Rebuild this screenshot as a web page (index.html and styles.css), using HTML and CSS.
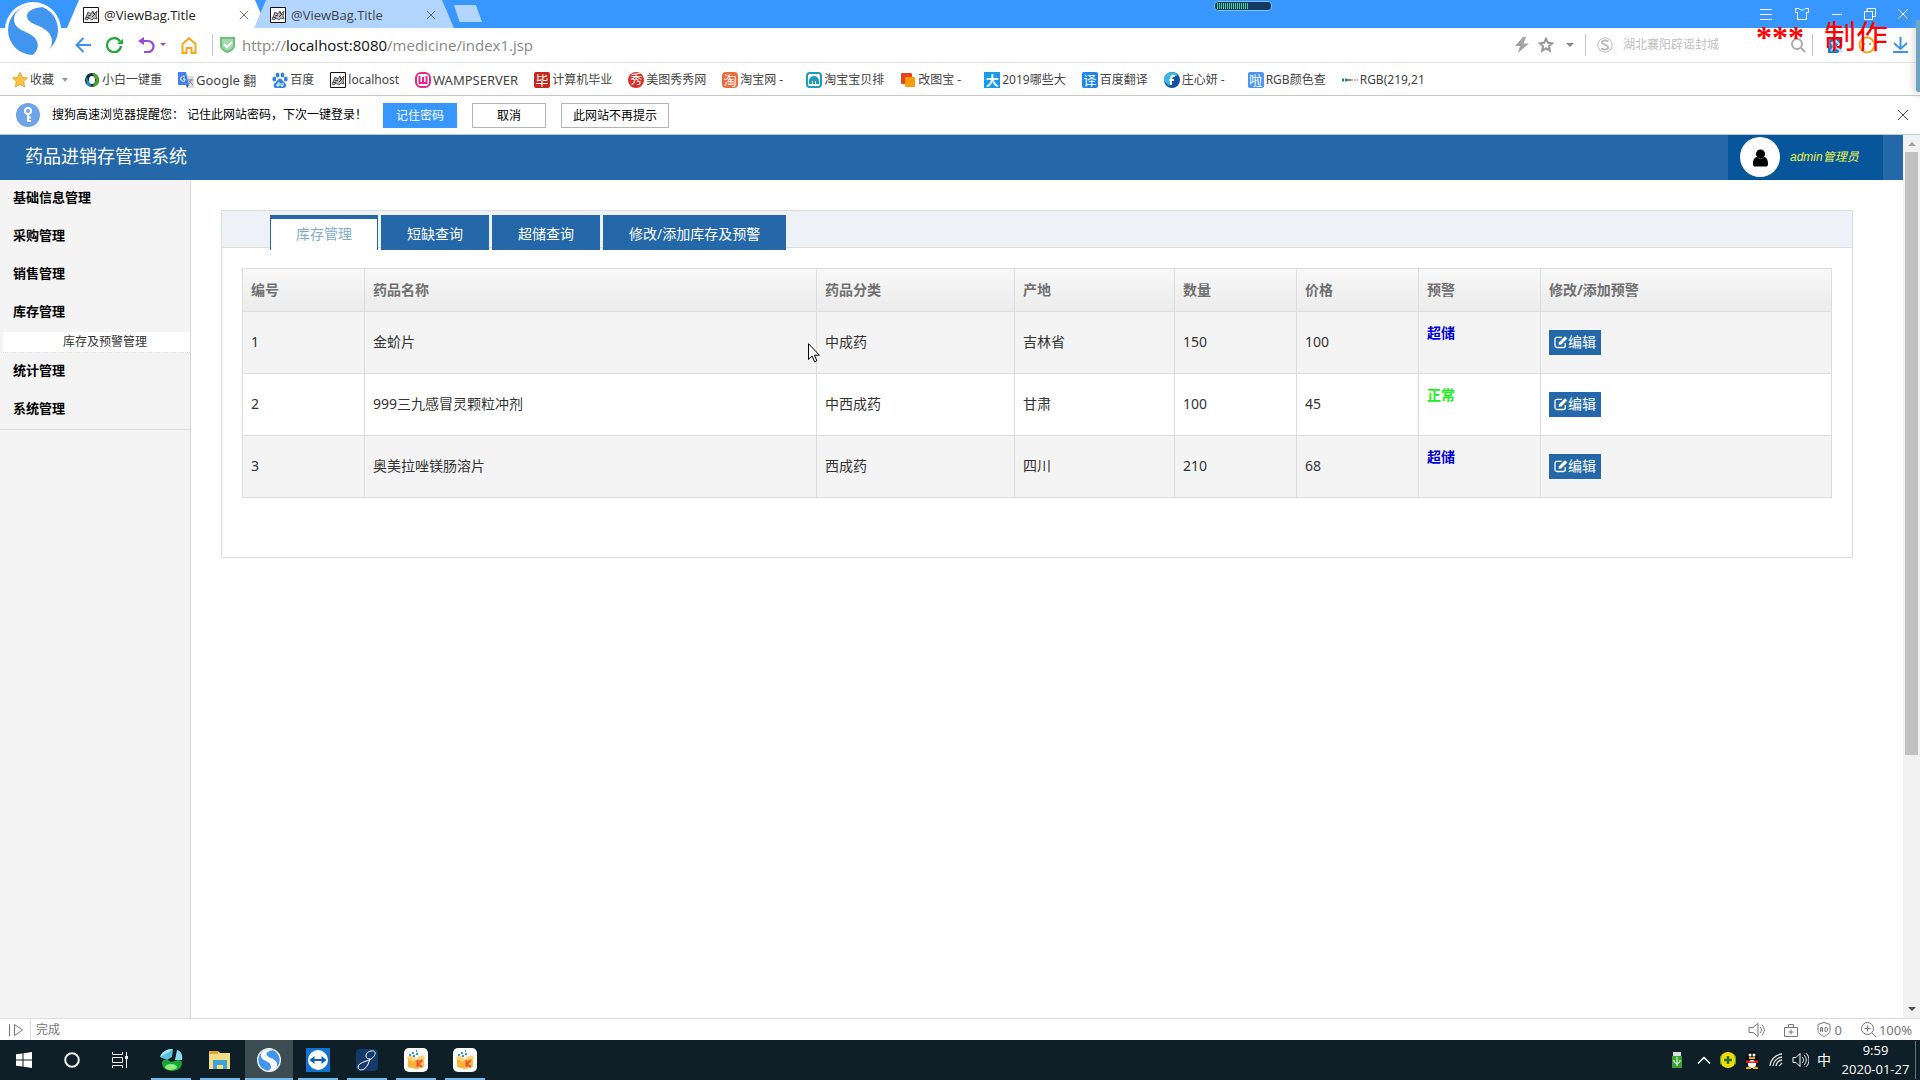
FILE: index.html
```html
<!DOCTYPE html>
<html lang="zh-CN">
<head>
<meta charset="utf-8">
<title>@ViewBag.Title</title>
<link rel="stylesheet" href="styles.css">
</head>
<body>
<svg class="defs" aria-hidden="true">
  <symbol id="site" viewBox="0 0 16 16"><path d="M.5.5h15v15H.5z" fill="#fff" stroke="#111"/><path d="M2 12l2-4 1-3 3 2 2-3 1 3 3-3-1 5 1 3-3-1-2 2-3-2-2 2-2-1" stroke="#555" fill="#bbb"/><path d="M5 9l3-1M9 10l3-3M3 10l3 1M10 5l2 3" stroke="#333" fill="none"/></symbol>
  <symbol id="x" viewBox="0 0 12 12"><path d="M1 1l10 10M11 1L1 11" stroke="currentColor" fill="none"/></symbol>
  <symbol id="edit" viewBox="0 0 14 14"><path d="M11.3 8v2.5a2 2 0 0 1-2 2H3a2 2 0 0 1-2-2V4.300a2 2 0 0 1 2-2h5" stroke="#fff" stroke-width="1.300" fill="none"/><path d="M4.600 9.800l.4-2.600 6-6 2.300 2.300-6 6z" fill="#fff"/></symbol>
  <symbol id="sogou" viewBox="0 0 56 56"><circle cx="28" cy="28" r="28" fill="#fff"/><circle cx="28" cy="28" r="25" fill="#4295ee"/><path d="M40 5C25-1 8 7 9 18c1 11 15 11 21 18 6 8 1 15-4 18 12 1 21-6 21-14 0-9-7-13-13-16-6-2-12-5-12-10 0-5 7-9 18-9z" fill="#fff"/></symbol>
  <symbol id="kbox" viewBox="0 0 24 24"><rect width="24" height="24" rx="5" fill="#fff"/><path d="M4 10l8 2 8-2v9l-8 2-8-2z" fill="#fbb23a"/><path d="M2 10l4-3 6 3-2 4zM22 10l-4-3-6 3 2 4z" fill="#ffd27c"/><path d="M12 12l8-2v9l-8 2z" fill="#ffc255"/><path d="M13.500 12v7M18 12l-4 4 4 3" stroke="#f0562a" stroke-width="2" fill="none"/><path d="M5 6h2v2H5zM8 4h2v2H8zM9 7h2v2H9zM12 2h1v2h-1zM12 5h2v2h-2z" fill="#2b9fe0"/></symbol>
</svg>

<header class="titlebar">
  <div class="tab tab-active"><svg class="i16"><use href="#site"/></svg><span>@ViewBag.Title</span><button class="plain" aria-label="关闭标签"><svg width="10" height="10"><use href="#x"/></svg></button></div>
  <div class="tab"><svg class="i16"><use href="#site"/></svg><span>@ViewBag.Title</span><button class="plain" aria-label="关闭标签"><svg width="10" height="10"><use href="#x"/></svg></button></div>
  <button class="plain newtab" aria-label="新标签"></button>
  <div class="window-buttons">
    <button class="plain" aria-label="菜单"><svg width="14" height="14"><path d="M1 2.500h12M1 7.500h12M1 12.500h12" stroke="#fff"/></svg></button>
    <button class="plain" aria-label="皮肤"><svg width="16" height="14"><path d="M5 1.500H1.500v4h2v7h9v-7h2v-4H11L9.500 3h-3z" stroke="#fff" fill="none"/></svg></button>
    <button class="plain" aria-label="最小化"><svg width="12" height="14"><path d="M1 7.500h10" stroke="#fff"/></svg></button>
    <button class="plain" aria-label="还原"><svg width="12" height="14"><path d="M.5 4.500h8v8h-8zM3 4V1.500h8.500v8H9" stroke="#fff" fill="none"/></svg></button>
    <button class="plain" aria-label="关闭"><svg width="12" height="12"><use href="#x"/></svg></button>
  </div>
</header>
<svg class="logo" viewBox="0 0 56 56"><use href="#sogou"/></svg>
<svg class="meter" width="58" height="10"><rect x=".5" y=".5" width="57" height="9" rx="3.500" fill="#123a63" stroke="#7cc0ef"/><path d="M3 5h31" stroke="#46d08a" stroke-width="6" stroke-dasharray="1 1"/></svg>

<nav class="addressbar">
  <button class="plain" aria-label="后退"><svg width="16" height="16"><path d="M8.500 1L1.500 8l7 7M1.500 8H16" stroke="#3d92ee" stroke-width="2" fill="none"/></svg></button>
  <button class="plain" aria-label="刷新"><svg width="17" height="16"><path d="M14 4.500A7 7 0 1 0 15 9" stroke="#1fa838" stroke-width="2.200" fill="none"/><path d="M17 2v5h-6z" fill="#1fa838"/></svg></button>
  <button class="plain undo" aria-label="恢复"><svg width="17" height="16"><path d="M3 4h7a5.500 5.500 0 0 1 0 11H6" stroke="#9a49d6" stroke-width="2.200" fill="none"/><path d="M0 4l6-4v8z" fill="#9a49d6"/></svg><svg width="6" height="4"><path d="M0 0h6L3 3z" fill="#9a49d6"/></svg></button>
  <button class="plain" aria-label="主页"><svg width="16" height="17"><path d="M1.500 7L8 1.200 14.500 7v9h-4v-5h-5v5h-4z" stroke="#f8a61c" stroke-width="2" fill="none"/></svg></button>
  <i class="sep"></i>
  <svg class="shield" width="15" height="16"><path d="M1 1h13v8c0 3-4 5-6.500 6C5 14 1 12 1 9z" fill="#a5dcae" stroke="#6cc27c" stroke-width="2"/><path d="M4 7l3 3 5-5" stroke="#fff" stroke-width="2" fill="none"/></svg>
  <div class="url" role="textbox" aria-label="地址">http://<b>localhost:8080</b>/medicine/index1.jsp</div>
  <svg width="14" height="16"><path d="M8 0L0 9h5l-2 7 11-9.500H8.500L11 0z" fill="#a3a3a3"/></svg>
  <svg class="fav" width="16" height="16"><path d="M8 1.800l1.900 4 4.400.5-3.300 3 .9 4.400L8 11.500l-3.900 2.200.9-4.400-3.300-3 4.400-.5z" stroke="#999" stroke-width="2" fill="none"/></svg>
  <svg class="more" width="8" height="4"><path d="M0 0h8L4 4z" fill="#888"/></svg>
  <i class="sep sep-engine"></i>
  <svg class="i16" viewBox="0 0 16 16"><circle cx="8" cy="8" r="7.200" stroke="#bbb" fill="none"/><path d="M11.500 4.500C9 3 5 3.300 5 5.500s6 2.200 6 5-5 2.500-7 .8" stroke="#bbb" stroke-width="2" fill="none"/></svg>
  <input class="search" aria-label="搜索" placeholder="湖北襄阳辟谣封城">
  <svg class="i16" viewBox="0 0 16 16"><circle cx="7" cy="7" r="5" stroke="#aaa" stroke-width="2" fill="none"/><path d="M11 11l4 4" stroke="#aaa" stroke-width="2"/></svg>
  <i class="sep sep-search"></i>
  <svg class="ext" width="15" height="16"><path d="M0 0h14v11l-4 5H0z" fill="#1e78c2"/><path d="M3 14l3-4-2-4 4-2 3 3-2 4 5 4" stroke="#b8e0fa" stroke-width="2" fill="none"/></svg>
  <svg class="face" width="18" height="18"><circle cx="9" cy="9" r="7.500" stroke="#f8a61c" stroke-width="2" fill="none"/><path d="M5 8h2M11 8h2" stroke="#f8a61c" stroke-width="2"/></svg>
  <svg width="15" height="16"><path d="M7.500 0v12M1 6l6.500 6L14 6M0 15h15" stroke="#3d92ee" stroke-width="2" fill="none"/></svg>
</nav>
<div class="watermark"><b>***</b><span>制作</span></div>
<i class="dock"></i>

<nav class="bookmarks">
  <a href="#" class="fav-menu"><svg class="i16" viewBox="0 0 16 16"><path d="M8 .5l2.300 4.900 5.200.6-3.900 3.600 1.100 5.400L8 12.400 3.300 15l1.100-5.400L.5 6l5.200-.6z" fill="#f7c143" stroke="#e9a930"/></svg>收藏<svg class="caret" width="6" height="4"><path d="M0 0h6L3 4z" fill="#999"/></svg></a>
  <a href="#"><svg class="i16" viewBox="0 0 16 16"><circle cx="8" cy="8" r="7" fill="#122c44"/><path d="M8 1a7 7 0 0 1 0 14l4-7z" fill="#4ba32a"/><path d="M2 4l6 11-5-2z" fill="#1c95c8"/><ellipse cx="8" cy="8" rx="3" ry="4" fill="#fff"/></svg>小白一键重</a>
  <a href="#" class="wide"><svg class="i16" viewBox="0 0 16 16"><path d="M7 4h9v12H9z" fill="#dcdcdc"/><path d="M0 0h8l3 13H1a1 1 0 0 1-1-1z" fill="#4480e8"/><path d="M8 13h3l-2 3z" fill="#2d56b8"/><path d="M7 5a2.500 2.500 0 1 0 0 3.500V7H5" stroke="#fff" fill="none"/><path d="M10 8h5M13 7c0 3-1 4-2 5M11 9l4 4" stroke="#788" fill="none"/></svg>Google 翻</a>
  <a href="#"><svg class="i16" viewBox="0 0 16 16"><g fill="#3182de"><ellipse cx="2.300" cy="7" rx="1.900" ry="2.500"/><ellipse cx="5.600" cy="3" rx="1.900" ry="2.600"/><ellipse cx="10.500" cy="3" rx="1.900" ry="2.600"/><ellipse cx="13.800" cy="7" rx="1.900" ry="2.500"/><path d="M8 6.500c2 0 3 3 5 4.500s1 5-1.500 5H4c-3 0-3-3.500-1-5s3-4.500 5-4.500z"/></g><path d="M7 10v4H5v-2h2M9 11v3h2v-3" stroke="#fff" fill="none"/></svg>百度</a>
  <a href="#"><svg class="i16"><use href="#site"/></svg>localhost</a>
  <a href="#" class="wide"><svg class="i16" viewBox="0 0 16 16"><rect x="1" y="1" width="14" height="14" rx="5" fill="#fff" stroke="#e5268f" stroke-width="2"/><path d="M4.500 4v7h7V4M8 5v5" stroke="#e5268f" stroke-width="2" fill="none"/></svg>WAMPSERVER</a>
  <a href="#"><i class="glyph red">毕</i>计算机毕业</a>
  <a href="#"><i class="glyph round">秀</i>美图秀秀网</a>
  <a href="#"><i class="glyph orange">淘</i><span class="long">淘宝网 -</span></a>
  <a href="#"><svg class="i16" viewBox="0 0 16 16"><rect x="1" y="1" width="14" height="14" rx="3" fill="#fff" stroke="#1c9cbc" stroke-width="2"/><path d="M3 12V9a5 5 0 0 1 10 0v3h-3V9H9v3H7V9H6v3z" fill="#1c9cbc"/></svg>淘宝宝贝排</a>
  <a href="#"><svg class="i16" viewBox="0 0 16 16"><rect x="1" y="1" width="11" height="11" rx="1" fill="#e8431f"/><rect x="5" y="5" width="10" height="10" rx="1" fill="#fd9a05"/></svg><span class="long">改图宝 -</span></a>
  <a href="#"><i class="glyph cyan">大</i>2019哪些大</a>
  <a href="#"><i class="glyph blue">译</i>百度翻译</a>
  <a href="#"><svg class="i16" viewBox="0 0 16 16"><circle cx="8" cy="8" r="8" fill="#1551a5"/><path d="M0 9a8 8 0 0 1 14-6L9 5l-4 9z" fill="#3bb7e6"/><path d="M11 4c-3-1-4 1-4 4v5M5 8h5" stroke="#fff" stroke-width="2" fill="none"/></svg><span class="long">庄心妍 -</span></a>
  <a href="#"><i class="glyph sky">啦</i>RGB颜色查</a>
  <a href="#"><svg class="i16" viewBox="0 0 16 16"><path d="M0 8h5" stroke="#2277a8" stroke-width="3" stroke-dasharray="2 1"/><path d="M5 8h4" stroke="#6a9a4a" stroke-width="2"/><path d="M9 8h7" stroke="#eaa0a0" stroke-width="2" stroke-dasharray="2 1"/></svg>RGB(219,21</a>
</nav>

<section class="notice">
  <svg width="24" height="24"><circle cx="12" cy="12" r="12" fill="#6da3e8"/><circle cx="12" cy="8" r="3" stroke="#fff" stroke-width="2" fill="none"/><path d="M12 11v8M12 14.500h3M12 18h3" stroke="#fff" stroke-width="2"/></svg>
  <p>搜狗高速浏览器提醒您： 记住此网站密码，下次一键登录！</p>
  <button class="primary">记住密码</button>
  <button>取消</button>
  <button>此网站不再提示</button>
  <button class="plain dismiss" aria-label="关闭提示"><svg width="12" height="12"><use href="#x"/></svg></button>
</section>

<div class="viewport">
  <div class="page">
    <header class="app-header">
      <h1>药品进销存管理系统</h1>
      <a href="#" class="user"><svg width="40" height="40"><circle cx="20" cy="20" r="20" fill="#fff"/><circle cx="20.500" cy="17" r="4.500"/><path d="M13 27c0-5 2-7 4-7 2 2 5 2 7 0 2 0 4 2 4 7 0 2-1 2.500-2 2.500H15c-1 0-2-.5-2-2.500z"/></svg>admin管理员</a>
    </header>
    <div class="app-body">
      <aside class="sidebar">
        <a href="#">基础信息管理</a>
        <a href="#">采购管理</a>
        <a href="#">销售管理</a>
        <a href="#">库存管理</a>
        <a href="#" class="sub">库存及预警管理</a>
        <a href="#">统计管理</a>
        <a href="#">系统管理</a>
      </aside>
      <main class="content">
        <section class="panel">
          <div class="panel-tabs">
            <button class="current">库存管理</button>
            <button>短缺查询</button>
            <button>超储查询</button>
            <button>修改/添加库存及预警</button>
          </div>
          <table>
            <colgroup><col class="c-no"><col class="c-name"><col class="c-type"><col class="c-place"><col class="c-num"><col class="c-num"><col class="c-num"><col></colgroup>
            <thead><tr><th>编号</th><th>药品名称</th><th>药品分类</th><th>产地</th><th>数量</th><th>价格</th><th>预警</th><th>修改/添加预警</th></tr></thead>
            <tbody>
              <tr><td>1</td><td>金蚧片</td><td>中成药</td><td>吉林省</td><td>150</td><td>100</td><td class="warn over">超储</td><td><button class="edit"><svg width="14" height="14"><use href="#edit"/></svg>编辑</button></td></tr>
              <tr><td>2</td><td>999三九感冒灵颗粒冲剂</td><td>中西成药</td><td>甘肃</td><td>100</td><td>45</td><td class="warn ok">正常</td><td><button class="edit"><svg width="14" height="14"><use href="#edit"/></svg>编辑</button></td></tr>
              <tr><td>3</td><td>奥美拉唑镁肠溶片</td><td>西成药</td><td>四川</td><td>210</td><td>68</td><td class="warn over">超储</td><td><button class="edit"><svg width="14" height="14"><use href="#edit"/></svg>编辑</button></td></tr>
            </tbody>
          </table>
        </section>
      </main>
    </div>
  </div>
  <div class="scrollbar">
    <svg width="8" height="4"><path d="M0 4h8L4 0z" fill="#a3a3a3"/></svg>
    <div class="track"><div class="thumb"></div></div>
    <svg width="8" height="4"><path d="M0 0h8L4 4z" fill="#505050"/></svg>
  </div>
</div>
<svg class="cursor" width="13" height="20"><path d="M.5.700v15.800l3.600-3.500 2.500 5.800 2.300-1-2.500-5.600h5z" fill="#fff" stroke="#000"/></svg>

<footer class="statusbar">
  <svg width="16" height="14"><path d="M1.500 1v12M6.500 1.500v11l8-5.500z" stroke="#777" fill="none"/></svg>
  <span class="state">完成</span>
  <svg width="17" height="14"><path d="M1 4.500h4l5-4v13l-5-4H1zM12 4c2 2 2 4 0 6M14 2c3 3 3 7 0 10" stroke="#777" fill="none"/></svg>
  <svg width="14" height="14"><path d="M.5 4.500h13v9H.5zM4.500 4V1.500h5V4M7 6.500v5M4.500 9h5" stroke="#777" fill="none"/></svg>
  <span class="stat"><svg width="14" height="15"><path d="M7 .5l6 2v6c0 3-4 5-6 6-2-1-6-3-6-6v-6z" stroke="#777" fill="none"/><path d="M3.500 10V5.500h2V10M3.500 8h2M8 5.500h1.500l1 1v2l-1 1H8z" stroke="#777" fill="none"/></svg>0</span>
  <span class="stat"><svg width="15" height="15"><circle cx="6.500" cy="6.500" r="6" stroke="#777" fill="none"/><path d="M3.500 6.500h6M6.500 3.500v6M11 11l4 4" stroke="#777"/></svg>100%</span>
</footer>

<footer class="taskbar">
  <button aria-label="开始"><svg width="16" height="16"><path d="M0 2.300L6.500 1.400v6.100H0zM7.500 1.200L16 0v7.500H7.500zM0 8.500h6.500v6.100L0 13.700zM7.500 8.500H16V16l-8.500-1.200z" fill="#fff"/></svg></button>
  <button aria-label="Cortana"><svg width="16" height="16"><circle cx="8" cy="8" r="6.800" stroke="#eee" stroke-width="2" fill="none"/></svg></button>
  <button aria-label="任务视图"><svg width="18" height="16"><path d="M1.500 0v2.500h10V0M1.500 16v-2.500h10V16M1.500 5.500h10v5h-10zM15.500 0v16" stroke="#eee" fill="none"/><path d="M14 4h3v3h-3z" fill="#eee"/></svg></button>
  <button class="app" aria-label="浏览器"><svg width="24" height="24"><path d="M1 9C3 4 7 1 14 1l-1 8-5 3z" fill="#5cc0d8"/><path d="M1 9C3 4 7 1 14 1l-4 3z" fill="#a6e6f2"/><path d="M18 2c4 1 6 5 5 10h-7z" fill="#8fd8ec"/><path d="M3 15c0-3 3-4 6-3l3 2 7-2c3 0 4 1 4 3 0 5-5 8-10 8S3 20 3 15z" fill="#18a63b"/><ellipse cx="12" cy="19" rx="6" ry="3" fill="#90ee82"/></svg></button>
  <button class="app" aria-label="文件资源管理器"><svg width="22" height="20"><path d="M0 1h9l2 2h10v16H0z" fill="#f6dc84"/><path d="M0 1h9v3H0z" fill="#dba835"/><path d="M4 19v-9h14v9h-4v-4H8v4z" fill="#3fa2d5"/></svg></button>
  <button class="app active" aria-label="搜狗浏览器"><svg width="24" height="24"><use href="#sogou"/></svg></button>
  <button class="app" aria-label="TeamViewer"><svg width="24" height="24"><path d="M0 0h24v24H0z" fill="#0f74d1"/><circle cx="12" cy="12" r="10" fill="#fff"/><path d="M3.500 12l5-4v3h7V8l5 4-5 4v-3h-7v3z" fill="#0f5fb4"/></svg></button>
  <button class="app" aria-label="数据库工具"><svg width="22" height="22"><rect width="22" height="22" rx="4" fill="#15396b"/><path d="M14 10C8 10 9 3 15 2c6-1 5 5 0 8S3 13 2 18c0 4 6 4 9-1 2-3 2-5 3-7" stroke="#fff" fill="none"/></svg></button>
  <button class="app" aria-label="工具箱"><svg width="24" height="24"><use href="#kbox"/></svg></button>
  <button class="app" aria-label="工具箱"><svg width="24" height="24"><use href="#kbox"/></svg></button>
  <div class="tray">
    <span class="usb"><svg width="10" height="16"><path d="M1 0h8v4H1z" fill="#ddd"/><path d="M0 4h10v12H0z" fill="#3aa232"/><path d="M5 5v9M2 8v2l3 2 3-2V8" stroke="#fff" fill="none"/></svg></span>
    <span><svg width="14" height="8"><path d="M1 7.500l6-6 6 6" stroke="#fff" stroke-width="1.500" fill="none"/></svg></span>
    <span><svg width="16" height="16"><circle cx="8" cy="8" r="8" fill="#f5d90a"/><path d="M1 4a8 8 0 0 0 0 8M15 4a8 8 0 0 1 0 8" stroke="#50a82b" stroke-width="2" fill="none"/><path d="M8 4v8M4 8h8" stroke="#23772b" stroke-width="2.500"/></svg></span>
    <span><svg width="16" height="18"><ellipse cx="8" cy="9" rx="7" ry="7" fill="#111"/><ellipse cx="8" cy="5" rx="5" ry="5" fill="#111"/><ellipse cx="8" cy="13" rx="4" ry="4" fill="#fff"/><circle cx="6" cy="4" r="1.500" fill="#fff"/><circle cx="10" cy="4" r="1.500" fill="#fff"/><path d="M5 7h6" stroke="#f4a51d" stroke-width="2"/><path d="M2 9c4 2 8 2 12 0v3H2z" fill="#df2020"/><path d="M2 17h5M9 17h5" stroke="#f4a51d" stroke-width="2"/></svg></span>
    <span><svg width="14" height="14"><path d="M1 13A13 13 0 0 1 13 1M4 13a10 10 0 0 1 9-9M7 13a7 7 0 0 1 6-6M10 13l3-3" stroke="#ddd" stroke-width="1.300" fill="none"/></svg></span>
    <span><svg width="17" height="14"><path d="M1 4.500h3l4-4v13l-4-4H1zM10 4c2 2 2 4 0 6M12 2c3 3 3 7 0 10M14 0c4 4 4 10 0 14" stroke="#fff" fill="none"/></svg></span>
    <span>中</span>
    <time>9:59<br>2020-01-27</time>
  </div>
</footer>
</body>
</html>
```
FILE: styles.css
```css
* { box-sizing: border-box; }
body {
  margin: 0;
  height: 100vh;
  display: flex;
  flex-direction: column;
  overflow: hidden;
  background: #fff;
  color: #333;
  font: 12px/18px "Noto Sans", "Noto Sans CJK SC", sans-serif;
}
svg { display: block; flex: none; }
a { color: inherit; text-decoration: none; }
button { font: inherit; color: inherit; cursor: pointer; }
.defs { position: absolute; width: 0; height: 0; }
.i16 { width: 16px; height: 16px; }
.plain { display: flex; align-items: center; padding: 0; border: 0; background: none; }

/* browser window */
.titlebar {
  flex: none;
  display: flex;
  height: 28px;
  padding-left: 67px;
  background: #3797fe;
}
.tab {
  display: flex;
  align-items: center;
  gap: 5px;
  width: 200px;
  padding: 2px 18px 0 16px;
  background: #b1d5ff;
  clip-path: polygon(6% 0, 94% 0, 100% 100%, 0 100%);
  font-family: "Open Sans", sans-serif;
  font-size: 13px;
  color: #444;
}
.tab + .tab { margin-left: -13px; }
.tab-active { background: #fff; color: #222; }
.tab span { flex: 1; }
.tab button { color: #555; }
.newtab {
  width: 28px;
  height: 17px;
  margin-top: 5px;
  background: #b1d5ff;
  clip-path: polygon(0 0, 78% 0, 100% 100%, 20% 100%);
}
.window-buttons {
  display: flex;
  align-items: center;
  gap: 21px;
  margin-left: auto;
  padding-right: 11px;
  color: #fff;
}
.logo { position: absolute; left: 5px; top: 2px; width: 56px; height: 56px; }
.meter { position: absolute; left: 1214px; top: 1px; }
.addressbar {
  flex: none;
  display: flex;
  align-items: center;
  height: 35px;
  padding: 0 12px 0 75px;
  gap: 15px;
  border-bottom: 1px solid #e2e2e2;
}
.undo { gap: 5px; }
.sep { width: 1px; height: 22px; background: #c8c8c8; }
.shield { margin-left: -8px; }
.url { flex: 1; margin-left: -8px; font-family: "Open Sans", sans-serif; font-size: 15px; color: #888; white-space: nowrap; }
.url b { font-weight: 400; color: #111; }
.fav { margin: 0 -3px 0 -6px; }
.more, .sep-engine { margin-right: -4px; }
.search {
  width: 156px;
  margin: 0 -4px 0 -5px;
  padding: 0;
  border: 0;
  font: inherit;
}
.search::placeholder { color: #c0c0c0; }
.sep-search { margin-left: -9px; }
.face { margin-right: 2px; }
.watermark {
  position: absolute;
  left: 1756px;
  top: 18px;
  display: flex;
  gap: 20px;
  font: 32px/38px "Liberation Serif", "Noto Sans CJK SC", serif;
  color: #f00;
}
.dock { position: absolute; right: 0; top: 20px; width: 4px; height: 72px; background: #6fa5c4; border-radius: 2px 0 0 2px; box-shadow: 0 2px 8px #aaa; }
.bookmarks {
  flex: none;
  display: flex;
  align-items: center;
  gap: 16px;
  height: 33px;
  padding: 1px 0 0 12px;
  border-bottom: 1px solid #c8c8c8;
  color: #444;
  white-space: nowrap;
}
.bookmarks a { display: flex; align-items: center; gap: 2px; }
.bookmarks .wide { font-size: 13px; }
.caret { margin: 0 0 0 6px; }
.long { width: 50px; }
.glyph {
  width: 16px;
  height: 16px;
  border-radius: 2px;
  font-size: 13px;
  line-height: 16px;
  font-style: normal;
  text-align: center;
  color: #fff;
}
.red { background: #c8281a; }
.round { background: #de2f27; border-radius: 8px; font-size: 12px; }
.orange { background: #ec6a3c; border-radius: 4px; }
.cyan { background: #1a9be8; border-radius: 0; font-weight: 700; }
.blue { background: #1f86ee; }
.sky { background: #4a97f2; }
.notice {
  flex: none;
  display: flex;
  align-items: center;
  height: 39px;
  padding: 0 11px 0 16px;
  border-bottom: 1px solid #b9cbdc;
  color: #000;
}
.notice p { width: 331px; margin: 0 0 0 12px; white-space: nowrap; }
.notice button:not(.plain) {
  height: 25px;
  min-width: 74px;
  margin-right: 15px;
  padding: 1px 11px 0;
  border: 1px solid #b4b4b4;
  background: #fff;
}
.notice .primary:not(.plain) { border-color: #3797fe; background: #3797fe; color: #fff; }
.notice .dismiss { margin-left: auto; color: #555; }

/* application page */
.viewport { flex: 1; min-height: 0; display: flex; }
.page { flex: 1; min-width: 0; display: flex; flex-direction: column; }
.app-header {
  flex: none;
  display: flex;
  justify-content: space-between;
  height: 45px;
  padding: 0 20px 0 25px;
  background: #2468a9;
  color: #fff;
}
.app-header h1 { margin: 0; font-size: 18px; line-height: 43px; font-weight: 400; }
.user {
  display: flex;
  align-items: center;
  gap: 10px;
  width: 155px;
  padding: 0 12px 1px;
  background: #07559b;
  color: #e6f34a;
  font-family: "Liberation Sans", "Noto Sans CJK SC", sans-serif;
  font-style: italic;
}
.app-body { flex: 1; display: flex; min-height: 0; }
.sidebar {
  flex: none;
  width: 191px;
  border-right: 1px solid #d9d9d9;
  background: #f4f4f4;
  color: #000;
}
.sidebar a { display: block; padding-left: 13px; font-size: 13px; line-height: 38px; font-weight: 700; margin-top: -2px; padding-bottom: 2px; }
.sidebar a:last-child { border-bottom: 1px solid #ddd; }
.sidebar .sub {
  margin: 0 0 0 3px;
  padding: 0 0 0 60px;
  border-bottom: 1px dotted #ddd;
  background: #fff;
  color: #333;
  font-size: 12px;
  line-height: 20px;
  font-weight: 400;
}
.content { flex: 1; min-width: 0; padding: 30px 50px 0 30px; }
.panel { min-height: 348px; border: 1px solid #dcdddf; }
.panel-tabs {
  display: flex;
  align-items: flex-start;
  gap: 3px;
  height: 37px;
  padding: 4px 0 0 48px;
  border-bottom: 1px solid #dcdddf;
  background: #eef1f7;
}
.panel-tabs button {
  height: 35px;
  padding: 2px 26px 0;
  border: 0;
  background: #2468a9;
  color: #fff;
  font-size: 14px;
}
.panel-tabs .current {
  padding: 0 25px 2px;
  border: solid #2468a9;
  border-width: 4px 1px 0;
  background: #fff;
  color: #7fabd2;
}
.panel table {
  width: calc(100% - 40px);
  margin: 20px;
  border-collapse: collapse;
  table-layout: fixed;
  font-size: 14px;
  line-height: 20px;
}
.c-no, .c-num { width: 122px; }
.c-name { width: 452px; }
.c-type { width: 198px; }
.c-place { width: 160px; }
th, td { padding: 0 8px; border: 1px solid #dcdddd; text-align: left; }
th { height: 43px; color: #707070; }
thead tr { background: linear-gradient(#f8f8f8, #ebebeb); }
td { height: 62px; padding-bottom: 1px; }
tbody tr:nth-child(odd) { background: #f4f4f4; }
td.warn { padding-top: 11px; vertical-align: top; font-weight: 700; }
.over { color: #0000d8; }
.ok { color: #1cf01c; }
.edit {
  display: flex;
  align-items: center;
  height: 25px;
  padding: 0 5px;
  border: 0;
  background: #2468a9;
  color: #fff;
}
.scrollbar {
  flex: none;
  display: flex;
  flex-direction: column;
  align-items: center;
  width: 17px;
  padding: 7px 0;
  background: #f1f1f1;
}
.track { flex: 1; width: 13px; padding: 6px 0; }
.thumb { height: 71%; background: #c1c1c1; }
.cursor { position: absolute; left: 808px; top: 343px; }

/* status bar and desktop taskbar */
.statusbar {
  flex: none;
  display: flex;
  align-items: center;
  gap: 19px;
  height: 22px;
  padding: 0 8px;
  border-top: 1px solid #ddd;
  color: #777;
}
.state { flex: 1; margin-left: -13px; padding-left: 5px; border-left: 1px solid #ddd; line-height: 21px; }
.stat { display: flex; align-items: center; gap: 3px; font-size: 13px; }
.taskbar { flex: none; display: flex; height: 40px; background: #0f1f27; color: #fff; }
.taskbar button {
  display: flex;
  align-items: center;
  justify-content: center;
  width: 48px;
  padding: 0;
  border: 0;
  background: none;
}
.taskbar .app { margin-left: 1px; background: linear-gradient(#76b9ed, #76b9ed) bottom / 40px 2px no-repeat; }
.taskbar button:nth-child(4) { margin-left: 3px; }
.taskbar .active { background: linear-gradient(#76b9ed, #76b9ed) bottom / 48px 2px no-repeat #3d4c53; }
.tray { display: flex; align-items: center; margin-left: auto; padding-right: 4px; }
.tray span { display: flex; justify-content: center; width: 24px; font-size: 14px; }
.tray .usb { width: 30px; }
.tray time {
  width: 80px;
  border-right: 1px solid #66727a;
  font-family: "Open Sans", sans-serif;
  font-size: 13px;
  line-height: 19px;
  text-align: center;
}
```
